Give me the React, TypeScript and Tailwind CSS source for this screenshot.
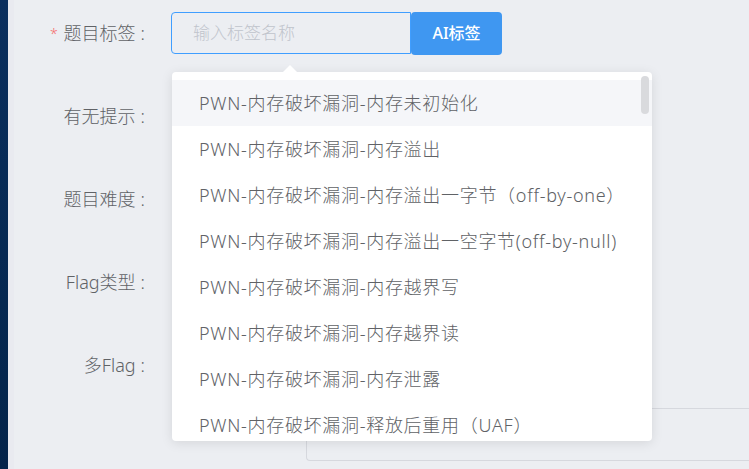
const font = { fontFamily: '"Noto Sans", "Noto Sans CJK SC", sans-serif' };

const options = [
  "PWN-内存破坏漏洞-内存未初始化",
  "PWN-内存破坏漏洞-内存溢出",
  "PWN-内存破坏漏洞-内存溢出一字节（off-by-one）",
  "PWN-内存破坏漏洞-内存溢出一空字节(off-by-null)",
  "PWN-内存破坏漏洞-内存越界写",
  "PWN-内存破坏漏洞-内存越界读",
  "PWN-内存破坏漏洞-内存泄露",
  "PWN-内存破坏漏洞-释放后重用（UAF）",
];

function Label({ children, required }: { children: React.ReactNode; required?: boolean }) {
  return (
    <div className="flex w-[131px] shrink-0 items-center justify-end text-[18px] font-light text-[#606266]">
      {required && <span className="mr-[6px] text-[14px] text-[#f56c6c]">*</span>}
      {children}
      <span className="ml-[5px]">:</span>
    </div>
  );
}

export default function App() {
  return (
    <div className="flex h-[469px] w-[749px] overflow-hidden bg-[#eceef2]" style={font}>
      <div className="w-[8px] shrink-0 bg-gradient-to-b from-[#0b2f5e] to-[#04244a]" />
      <div className="relative flex-1 border-l-[6px] border-[#e9eaf0]">
        <div className="flex flex-col gap-[41px] pt-[12px]">
          <div className="flex h-[42px] items-center">
            <Label required>题目标签</Label>
            <div className="ml-[26px] flex h-[42px] w-[240px] items-center rounded-l border border-[#409eff] pl-[21px] text-[17px] font-light text-[#c0c4cc]">
              输入标签名称
            </div>
            <button
              type="button"
              className="flex h-[43px] w-[91px] items-center justify-center rounded-[4px] bg-[#3f97f1] text-[16px] font-medium text-white"
            >
              AI标签
            </button>
          </div>
          <div className="flex h-[42px] items-center">
            <Label>有无提示</Label>
          </div>
          <div className="flex h-[42px] items-center">
            <Label>题目难度</Label>
          </div>
          <div className="flex h-[42px] items-center">
            <Label>Flag类型</Label>
          </div>
          <div className="flex h-[42px] items-center">
            <Label>多Flag</Label>
          </div>
        </div>
        <div className="ml-[292px] mt-[22px] h-[53px] rounded-l border border-r-0 border-[#d6d8de]" />

        <div className="absolute left-[158px] top-[72px] w-[480px] rounded-[4px] bg-white shadow-[0_2px_12px_rgba(0,0,0,0.1)]">
          <div className="absolute -top-[7px] left-[111px] h-0 w-0 border-x-[7px] border-b-[7px] border-x-transparent border-b-white" />
          <div className="absolute right-[3px] top-[4px] z-10 h-[38px] w-[8px] rounded-full bg-[#d9dadd]" />
          <div className="flex h-[369px] flex-col overflow-hidden py-[8px]">
            {options.map((o, i) => (
              <div
                key={o}
                className={`flex h-[46px] shrink-0 items-center pl-[27px] text-[18px] font-light tracking-[0.7px] text-[#606266] ${i === 0 ? "bg-[#f5f6f9]" : ""}`}
              >
                {o}
              </div>
            ))}
          </div>
        </div>
      </div>
    </div>
  );
}
